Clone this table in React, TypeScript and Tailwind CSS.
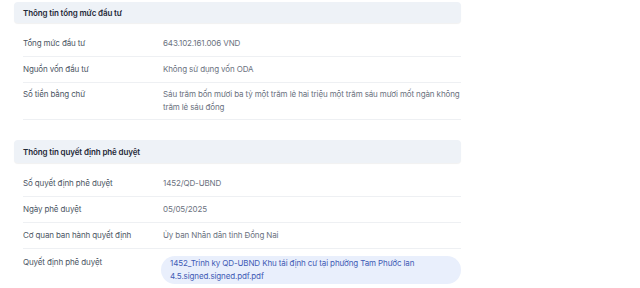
import React from "react";

const Row = ({ label, children, py = "py-[6px]" }: { label: string; children: React.ReactNode; py?: string }) => (
  <div className={"flex border-b border-[#eef0f3] leading-[13px] " + py}>
    <div className="w-[140px] shrink-0 text-[#4b5563]">{label}</div>
    <div className="flex-1 text-[#6b7280]">{children}</div>
  </div>
);

export default function App() {
  return (
    <div
      className="w-[640px] h-[288px] overflow-hidden bg-white text-[8px] tracking-[-0.12px]"
      style={{ fontFamily: "Inter, 'Noto Sans', sans-serif" }}
    >
      <div className="ml-[14px] w-[447px] pt-[2px]">
        <div className="h-[21px] rounded-[4px] bg-[#eef2f7] shadow-[0_1px_1px_rgba(0,0,0,0.06)] flex items-center pl-[9px] font-semibold text-[#1f2937]">
          Thông tin tổng mức đầu tư
        </div>
        <div className="ml-[9px] mt-[8px]">
          <Row label="Tổng mức đầu tư">643.102.161.006 VND</Row>
          <Row label="Nguồn vốn đầu tư">Không sử dụng vốn ODA</Row>
          <Row label="Số tiền bằng chữ" py="py-[5px]">
            Sáu trăm bốn mươi ba tỷ một trăm lẻ hai triệu một trăm sáu mươi mốt ngàn không
            <br />
            trăm lẻ sáu đồng
          </Row>
        </div>
        <div className="mt-[20px] h-[23px] rounded-[4px] bg-[#eef2f7] shadow-[0_1px_1px_rgba(0,0,0,0.06)] flex items-center pl-[9px] font-semibold text-[#1f2937]">
          Thông tin quyết định phê duyệt
        </div>
        <div className="ml-[9px] mt-[8px]">
          <Row label="Số quyết định phê duyệt">1452/QD-UBND</Row>
          <Row label="Ngày phê duyệt">05/05/2025</Row>
          <Row label="Cơ quan ban hành quyết định">Ủy ban Nhân dân tỉnh Đồng Nai</Row>
          <div className="flex border-b border-[#eef0f3] py-[7px] leading-[13px]">
            <div className="w-[138px] shrink-0 text-[#4b5563]">Quyết định phê duyệt</div>
            <div className="flex-1 rounded-[14px] bg-[#e9effc] px-[9px] py-[1px] text-[#3f5bb5]">
              1452_Trinh ky QD-UBND Khu tái định cư tại phường Tam Phước lan
              <br />
              4.5.signed.signed.pdf.pdf
            </div>
          </div>
        </div>
      </div>
    </div>
  );
}
